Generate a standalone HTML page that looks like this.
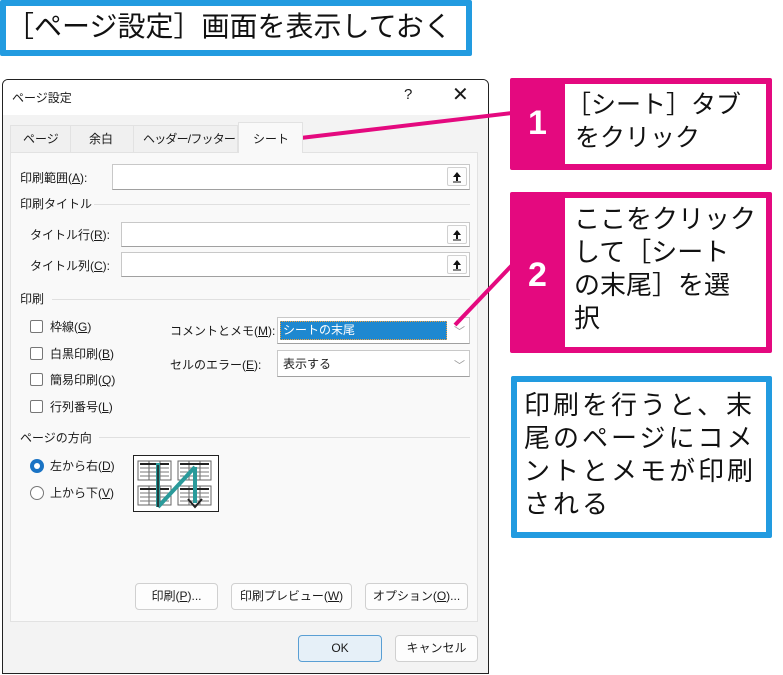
<!DOCTYPE html>
<html><head><meta charset="utf-8"><style>
*{margin:0;padding:0;box-sizing:border-box}
body{width:783px;height:675px;background:#fff;position:relative;overflow:hidden;font-family:"Liberation Sans","Noto Sans CJK JP",sans-serif;color:#1a1a1a}
.a{position:absolute}
.t{font-size:12px;white-space:nowrap;line-height:14px}
.in{position:absolute;background:#fff;border:1px solid #c8c8c8;border-bottom-color:#a0a0a0}
.up{position:absolute;right:2px;top:2px;width:20px;height:19px;border:1px solid #d0d0d0;background:#fdfdfd;border-radius:2px}
.sec{position:absolute;height:1px;background:#e0e0e0}
.cb{position:absolute;width:13px;height:13px;border:1px solid #777;border-radius:2px;background:#fff}
.btn{position:absolute;height:27px;border:1px solid #d0d0d0;background:#fdfdfd;border-radius:4px;font-size:12px;text-align:center;line-height:25px}
.big{font-size:26px;line-height:33px;color:#111;white-space:nowrap}
u{text-decoration:underline}
</style></head><body>
<div class="a" style="left:0;top:0;width:472px;height:56px;border:6px solid #229be0;border-radius:2px"></div>
<div class="a" style="left:6px;top:10px;font-size:28px;line-height:34px;color:#111;white-space:nowrap">［ページ設定］画面を表示しておく</div>

<div class="a" style="left:2px;top:79px;width:487px;height:595px;border:1px solid #222;border-radius:6px 6px 0 0;background:#f3f3f3;overflow:hidden">
 <div class="a" style="left:0;top:0;width:487px;height:35px;background:#fff"></div>
</div>
<div class="a t" style="left:12px;top:91px">ページ設定</div>
<div class="a" style="left:404px;top:86px;font-size:15px">?</div>
<div class="a" style="left:452px;top:82px;font-size:20px;font-weight:300">✕</div>
<div class="a" style="left:10px;top:125px;width:228px;height:27px;background:#f0f0f0;border:1px solid #e2e2e2;border-bottom:none"></div>
<div class="a" style="left:70px;top:125px;width:1px;height:27px;background:#e2e2e2"></div>
<div class="a" style="left:133px;top:125px;width:1px;height:27px;background:#e2e2e2"></div>
<div class="a t" style="left:23px;top:132px">ページ</div>
<div class="a t" style="left:89px;top:132px">余白</div>
<div class="a t" style="left:143px;top:132px;letter-spacing:-0.8px">ヘッダー/フッター</div>
<div class="a" style="left:238px;top:122px;width:65px;height:31px;background:#f9f9f9;border:1px solid #e2e2e2;border-bottom:none;z-index:2"></div>
<div class="a t" style="left:253px;top:132px;z-index:3">シート</div>
<div class="a" style="left:10px;top:152px;width:468px;height:470px;background:#f9f9f9;border:1px solid #e2e2e2"></div>

<div class="a t" style="left:20px;top:171px">印刷範囲(<u>A</u>):</div>
<div class="in" style="left:112px;top:164px;width:358px;height:26px"><div class="up"><svg width="18" height="17"><path d="M9 4L5 9h3v4h2V9h3z" fill="#111"/><path d="M5 14h8" stroke="#111"/></svg></div></div>
<div class="a t" style="left:20px;top:197px">印刷タイトル</div>
<div class="sec" style="left:94px;top:204px;width:376px"></div>
<div class="a t" style="left:30px;top:228px">タイトル行(<u>R</u>):</div>
<div class="in" style="left:121px;top:222px;width:349px;height:25px"><div class="up"><svg width="18" height="17"><path d="M9 4L5 9h3v4h2V9h3z" fill="#111"/><path d="M5 14h8" stroke="#111"/></svg></div></div>
<div class="a t" style="left:30px;top:259px">タイトル列(<u>C</u>):</div>
<div class="in" style="left:121px;top:252px;width:349px;height:25px"><div class="up"><svg width="18" height="17"><path d="M9 4L5 9h3v4h2V9h3z" fill="#111"/><path d="M5 14h8" stroke="#111"/></svg></div></div>
<div class="a t" style="left:20px;top:292px">印刷</div>
<div class="sec" style="left:52px;top:299px;width:418px"></div>

<div class="cb" style="left:30px;top:320px"></div><div class="a t" style="left:50px;top:320px">枠線(<u>G</u>)</div>
<div class="cb" style="left:30px;top:347px"></div><div class="a t" style="left:50px;top:347px">白黒印刷(<u>B</u>)</div>
<div class="cb" style="left:30px;top:373px"></div><div class="a t" style="left:50px;top:373px">簡易印刷(<u>Q</u>)</div>
<div class="cb" style="left:30px;top:400px"></div><div class="a t" style="left:50px;top:400px">行列番号(<u>L</u>)</div>

<div class="a t" style="left:170px;top:324px">コメントとメモ(<u>M</u>):</div>
<div class="in" style="left:277px;top:317px;width:193px;height:27px"><div class="a" style="left:2px;top:3px;width:167px;height:19px;background:#1e88d0;border:1px dotted #f0a040"></div><div class="a t" style="left:5px;top:5px;color:#fff">シートの末尾</div><div class="a" style="right:4px;top:5px;color:#999;font-size:11px">﹀</div></div>
<div class="a t" style="left:170px;top:358px">セルのエラー(<u>E</u>):</div>
<div class="in" style="left:277px;top:350px;width:193px;height:27px"><div class="a t" style="left:5px;top:6px">表示する</div><div class="a" style="right:4px;top:6px;color:#999;font-size:11px">﹀</div></div>

<div class="a t" style="left:20px;top:431px">ページの方向</div>
<div class="sec" style="left:99px;top:437px;width:371px"></div>
<div class="a" style="left:30px;top:459px;width:14px;height:14px;border-radius:50%;background:#1a73c4"><div class="a" style="left:4px;top:4px;width:6px;height:6px;border-radius:50%;background:#fff"></div></div>
<div class="a t" style="left:50px;top:459px">左から右(<u>D</u>)</div>
<div class="a" style="left:30px;top:486px;width:14px;height:14px;border-radius:50%;border:1px solid #777;background:#fff"></div>
<div class="a t" style="left:50px;top:486px">上から下(<u>V</u>)</div>
<svg class="a" style="left:133px;top:455px" width="86" height="57" viewBox="0 0 86 57">
<rect x="0.5" y="0.5" width="85" height="56" fill="#fff" stroke="#222"/>
<g fill="none" stroke="#666" stroke-width="1">
<rect x="5" y="6" width="33" height="19"/><rect x="45" y="6" width="33" height="19"/>
<rect x="5" y="31" width="33" height="19"/><rect x="45" y="31" width="33" height="19"/>
<path d="M16 6v19M27 6v19M56 6v19M67 6v19M16 31v19M27 31v19M56 31v19M67 31v19"/>
</g>
<g stroke="#777" stroke-width="1">
<path d="M7 13h29M7 17h29M7 21h29M47 13h29M47 17h29M47 21h29M7 38h29M7 42h29M7 46h29M47 38h29M47 42h29M47 46h29"/>
</g>
<g fill="#222"><rect x="7" y="8" width="29" height="2"/><rect x="47" y="8" width="29" height="2"/><rect x="7" y="33" width="29" height="2"/><rect x="47" y="33" width="29" height="2"/></g>
<path d="M25 8V52M25 52L62 12M62 12V48" stroke="#2a9a9a" stroke-width="4" fill="none"/>
<path d="M55 44l7 8 7-8" stroke="#222" stroke-width="2" fill="none"/>
<path d="M25 10V52" stroke="#222" stroke-width="1.5"/>
</svg>

<div class="btn" style="left:135px;top:583px;width:83px">印刷(<u>P</u>)...</div>
<div class="btn" style="left:231px;top:583px;width:121px">印刷プレビュー(<u>W</u>)</div>
<div class="btn" style="left:365px;top:583px;width:103px">オプション(<u>O</u>)...</div>
<div class="btn" style="left:298px;top:635px;width:84px;background:#e6f0f8;border-color:#5a9fd4">OK</div>
<div class="btn" style="left:395px;top:635px;width:83px">キャンセル</div>

<svg class="a" style="left:0;top:0" width="783" height="675">
<path d="M292 139L512 113" stroke="#e4097f" stroke-width="4"/>
<path d="M455 325L515 262" stroke="#e4097f" stroke-width="4"/>
</svg>
<div class="a" style="left:510px;top:78px;width:262px;height:92px;background:#e4097f;border-radius:2px"></div>
<div class="a" style="left:565px;top:84px;width:201px;height:80px;background:#fff"></div>
<div class="a" style="left:510px;top:103px;width:55px;text-align:center;color:#fff;font-size:34px;font-weight:bold;line-height:40px">1</div>
<div class="a big" style="left:566px;top:89px;font-size:25px">［シート］タブ<br><span style="margin-left:9px">をクリック</span></div>

<div class="a" style="left:510px;top:192px;width:262px;height:161px;background:#e4097f;border-radius:2px"></div>
<div class="a" style="left:565px;top:198px;width:201px;height:149px;background:#fff"></div>
<div class="a" style="left:510px;top:255px;width:55px;text-align:center;color:#fff;font-size:34px;font-weight:bold;line-height:40px">2</div>
<div class="a big" style="left:574px;top:203px">ここをクリック<br>して［シート<br>の末尾］を選<br>択</div>

<div class="a" style="left:511px;top:376px;width:261px;height:162px;border:6px solid #229be0;border-radius:2px"></div>
<div class="a big" style="left:524px;top:389px;letter-spacing:3px">印刷を行うと、末<br>尾のページにコメ<br>ントとメモが印刷<br>される</div>
</body></html>
